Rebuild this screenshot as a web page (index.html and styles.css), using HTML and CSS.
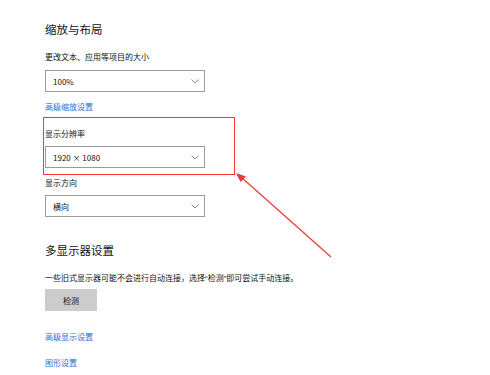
FILE: index.html
```html
<!DOCTYPE html>
<html lang="zh-CN">
<head>
<meta charset="utf-8">
<link rel="stylesheet" href="styles.css">
</head>
<body>
<div class="page">
  <h1 class="heading">缩放与布局</h1>
  <div class="label first">更改文本、应用等项目的大小</div>
  <div class="select"><span>100%</span><svg class="chev" width="8" height="5" viewBox="0 0 8 5"><polyline points="0.5,0.5 4,4 7.5,0.5" fill="none" stroke="#7a7a7a" stroke-width="0.9"/></svg></div>
  <a class="link l1">高级缩放设置</a>
  <div class="label l2">显示分辨率</div>
  <div class="select"><span>1920 × 1080</span><svg class="chev" width="8" height="5" viewBox="0 0 8 5"><polyline points="0.5,0.5 4,4 7.5,0.5" fill="none" stroke="#7a7a7a" stroke-width="0.9"/></svg></div>
  <div class="label l3">显示方向</div>
  <div class="select"><span>横向</span><svg class="chev" width="8" height="5" viewBox="0 0 8 5"><polyline points="0.5,0.5 4,4 7.5,0.5" fill="none" stroke="#7a7a7a" stroke-width="0.9"/></svg></div>
  <h2 class="heading h2">多显示器设置</h2>
  <div class="label desc">一些旧式显示器可能不会进行自动连接，选择<span class="q">“</span>检测<span class="q">”</span>即可尝试手动连接。</div>
  <div class="btn">检测</div>
  <a class="link l4">高级显示设置</a>
  <a class="link l5">图形设置</a>
</div>
<div class="annot-box"></div>
<svg class="annot-arrow" width="490" height="375" viewBox="0 0 490 375">
  <line x1="331" y1="257" x2="241" y2="177" stroke="#f23a3a" stroke-width="1.4"/>
  <polygon points="236,173 246,176.5 240.5,182" fill="#f23a3a"/>
</svg>
</body>
</html>
```
FILE: styles.css
```css
html, body {
  margin: 0;
  padding: 0;
  background: #ffffff;
}
body {
  width: 490px;
  height: 375px;
  overflow: hidden;
  position: relative;
  font-family: "Noto Sans CJK SC", "Noto Sans", sans-serif;
  color: #111;
}
.page {
  display: flex;
  flex-direction: column;
  align-items: flex-start;
  padding: 20px 0 0 45px;
}
.heading {
  margin: 0;
  font-size: 11.5px;
  font-weight: normal;
  line-height: 18px;
  height: 18px;
  color: #111;
}
.label {
  font-size: 8px;
  line-height: 12px;
  height: 12px;
  white-space: nowrap;
  color: #111;
}
.q {
  font-family: "Liberation Sans", sans-serif;
}
.first { margin-top: 13px; }
.l2 { margin-top: 15px; }
.l3 { margin-top: 9px; }
.select {
  box-sizing: border-box;
  width: 160px;
  height: 22px;
  margin-top: 6px;
  border: 1px solid #9a9a9a;
  display: flex;
  align-items: center;
  justify-content: space-between;
  padding: 0 5px 0 7px;
  font-size: 8px;
  color: #111;
}
.label.first + .select { margin-top: 7px; }
.chev { display: block; }
.link {
  font-size: 8px;
  line-height: 12px;
  height: 12px;
  color: #1f72d0;
  white-space: nowrap;
}
.l1 { margin-top: 9px; }
.h2 { margin-top: 24px; }
.desc { margin-top: 13px; }
.btn {
  margin-top: 5px;
  width: 52px;
  height: 22px;
  background: #cccccc;
  display: flex;
  align-items: center;
  justify-content: center;
  font-size: 8px;
  color: #111;
}
.l4 { margin-top: 20px; }
.l5 { margin-top: 14px; }
.annot-box {
  position: absolute;
  left: 43px;
  top: 117px;
  width: 192px;
  height: 58px;
  box-sizing: border-box;
  border: 1.5px solid #f23a3a;
}
.annot-arrow {
  position: absolute;
  left: 0;
  top: 0;
  pointer-events: none;
}
```
